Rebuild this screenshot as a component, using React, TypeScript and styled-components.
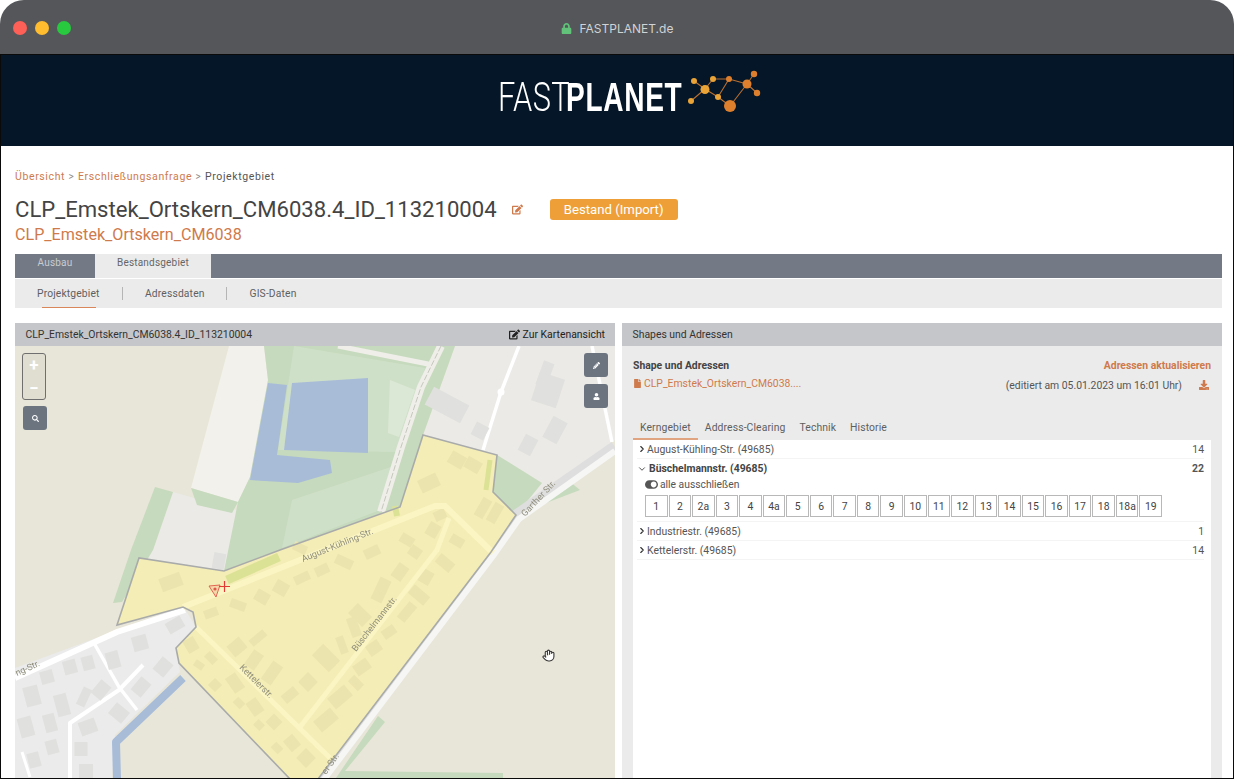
import styled, { createGlobalStyle } from "styled-components"
import { ChevronDown, ChevronRight, Hand } from "lucide-react"
import { FaDownload, FaEdit, FaFile, FaLock, FaPencilAlt, FaSearch, FaToggleOn, FaUser } from "react-icons/fa"

const GlobalStyle = createGlobalStyle`
    html, body {
        margin: 0;
        padding: 0;
        background: #ffffff;
    }
    * {
        box-sizing: border-box;
    }
`

const ORANGE = "#cf7a4c"

// map shapes, all in page coordinates (the svg viewBox starts at 15/346)
const yellowShape = "423,435 497,455 493,492 516,515 491,552 318,779 290,779 179,663 176,648 196,627 193,612 183,607 117,625 139,558 224,571 280,550 400,507"

const yellowHouses: Array<[number, number, number, number, number]> = [
    [171, 582, 22, 14, -20], [211, 613, 14, 9, -20], [238, 605, 16, 9, 20], [262, 597, 14, 12, 30], [281, 588, 14, 13, 30],
    [302, 578, 16, 9, -25], [322, 570, 14, 10, -25], [344, 562, 18, 10, 25], [372, 552, 16, 10, -25], [415, 552, 12, 11, 35],
    [400, 572, 12, 16, 35], [426, 577, 12, 14, 30], [445, 563, 18, 11, 40], [419, 595, 20, 11, 40], [407, 612, 10, 20, 40],
    [381, 590, 12, 24, 25], [360, 615, 20, 14, 45], [389, 632, 14, 10, -35], [354, 627, 10, 20, -20], [374, 648, 14, 12, -35],
    [342, 645, 8, 18, -20], [362, 667, 16, 12, -35], [326, 658, 24, 16, 45], [356, 683, 14, 9, 45], [308, 682, 14, 14, 45],
    [290, 695, 16, 10, -40], [340, 697, 22, 14, -40], [326, 720, 22, 14, -40], [272, 673, 12, 22, 35], [254, 660, 12, 18, 35],
    [237, 647, 16, 14, -40], [258, 638, 18, 8, -40], [191, 645, 12, 14, -30], [211, 658, 12, 8, 45], [199, 665, 10, 7, 35],
    [235, 683, 12, 18, -35], [215, 685, 10, 10, 45], [255, 707, 12, 16, -35], [239, 703, 10, 8, 45], [274, 722, 12, 12, 45],
    [259, 725, 9, 8, 45], [292, 743, 12, 14, -40], [277, 748, 10, 8, 45], [306, 758, 14, 14, 45], [457, 460, 16, 13, 30],
    [473, 465, 16, 12, 30], [429, 483, 20, 14, -25], [483, 508, 10, 20, 30], [495, 513, 10, 20, 30], [433, 530, 12, 14, 30],
    [457, 541, 14, 10, 30], [407, 540, 14, 10, 30], [440, 515, 12, 10, -25], [300, 548, 14, 9, 25],
]

const greyHouses: Array<[number, number, number, number, number]> = [
    [175, 625, 17, 12, -30], [140, 643, 15, 15, -15], [113, 660, 13, 17, -15], [88, 663, 12, 14, -15], [70, 667, 13, 14, -15],
    [47, 677, 13, 13, -15], [163, 667, 14, 16, 40], [141, 687, 13, 17, 40], [101, 690, 13, 17, 40], [84, 697, 9, 19, 25],
    [62, 705, 13, 22, -15], [32, 696, 15, 20, -15], [119, 713, 17, 14, 40], [88, 727, 17, 14, -20], [50, 723, 12, 18, -15],
    [26, 727, 14, 20, -15], [52, 747, 12, 14, -15], [81, 749, 13, 14, 0], [34, 760, 12, 15, -15], [86, 772, 14, 16, 0],
    [447, 405, 40, 20, 28], [480, 431, 14, 14, 28], [548, 390, 26, 30, 18], [545, 374, 11, 25, 20], [528, 445, 14, 18, 28], [555, 430, 16, 24, 28],
    [219, 561, 12, 16, 10],
]

const addressNumbers = ["1", "2", "2a", "3", "4", "4a", "5", "6", "7", "8", "9", "10", "11", "12", "13", "14", "15", "16", "17", "18", "18a", "19"]

const MapDrawing = () => (
    <MapSvg viewBox="15 346 600 432">
        <rect x="15" y="346" width="600" height="432" fill="#e8e6d9" />
        <polygon points="455,346 615,346 615,440 516,515 423,435" fill="#ebeae6" />

        <polygon points="229,346 264,346 268,380 250,477 238,502 191,488" fill="#f2f1ec" />
        <polygon points="173,492 243,512 224,571 139,558 153,550" fill="#ebeae6" />

        <polygon points="264,346 455,346 423,435 400,507 280,550 224,571 238,502 250,477 268,380" fill="#c6dabd" />
        <polygon points="294,346 425,368 397,452 278,450" fill="#cfe0c8" />
        <polygon points="292,500 391,467 380,510 282,548" fill="#cfe0c8" />
        <polygon points="390,380 415,390 399,437 388,433" fill="#dbe8d5" />
        <polygon points="155,487 173,492 153,550 122,602 113,603 131,550" fill="#c6dabd" />
        <polygon points="191,488 238,502 232,513 197,505" fill="#c6dabd" />
        <polygon points="497,455 542,483 516,515 493,492" fill="#c6dabd" />
        <polygon points="564,477 580,490 546,503" fill="#c6dabd" />
        <polygon points="378,716 385,722 345,771 503,773 503,778 336,778" fill="#c6dabd" />

        <polygon points="292,383 368,378 368,453 284,450" fill="#a8bcd8" />
        <polygon points="268,383 287,385 277,455 330,460 332,473 298,483 250,480" fill="#a8bcd8" />

        <polyline points="338,346 433,365" fill="none" stroke="#efeee9" strokeWidth="5" />
        <polyline points="441,346 421,387 401,447 381,512" fill="none" stroke="#efeee9" strokeWidth="8" />
        <polyline points="441,346 421,387 401,447 381,512" fill="none" stroke="#a9ada0" strokeWidth="0.6" strokeDasharray="6 2" />
        <polyline points="519,346 501,392 483,450" fill="none" stroke="#ffffff" strokeWidth="3.5" />
        <polyline points="592,346 612,442" fill="none" stroke="#ffffff" strokeWidth="3.5" />
        <circle cx="501" cy="392" r="3.500" fill="#ffffff" />

        <polygon points="15,668 183,606 196,627 176,648 180,672 115,735 112,779 15,779" fill="#ebebeb" />
        <polyline points="183,678 116,742 117,779" fill="none" stroke="#a8bcd8" strokeWidth="8" strokeLinejoin="round" />
        <polyline points="15,678 117,632 185,610" fill="none" stroke="#ffffff" strokeWidth="6" />
        <polyline points="94,643 119,687 137,710" fill="none" stroke="#ffffff" strokeWidth="3.5" />
        <polyline points="143,665 119,690 70,723 70,779" fill="none" stroke="#ffffff" strokeWidth="4" strokeLinejoin="round" />
        <polyline points="22,752 30,777" fill="none" stroke="#ffffff" strokeWidth="3" />
        {greyHouses.map(([x, y, w, h, r], i) => (
            <rect key={i} x={x - w / 2} y={y - h / 2} width={w} height={h} fill="#e0e0de" transform={`rotate(${r} ${x} ${y})`} />
        ))}

        <polyline points="615,447 517,515 491,552 318,782" fill="none" stroke="#dedede" strokeWidth="12" />
        <polyline points="615,451 519,519 493,556 322,782" fill="none" stroke="#f6f6f5" strokeWidth="6" />

        <polygon points={yellowShape} fill="#f4edb5" />
        <polyline points="227,580 279,557" fill="none" stroke="#dbe295" strokeWidth="9" />
        <polyline points="490,460 486,490" fill="none" stroke="#dbe295" strokeWidth="5" />
        <polyline points="395,506 397,516" fill="none" stroke="#dbe295" strokeWidth="6" />
        {yellowHouses.map(([x, y, w, h, r], i) => (
            <rect key={i} x={x - w / 2} y={y - h / 2} width={w} height={h} fill="#ece4ae" transform={`rotate(${r} ${x} ${y})`} />
        ))}
        <polyline points="183,607 435,506 445,506 493,553" fill="none" stroke="#fbf5c4" strokeWidth="6" />
        <polyline points="449,518 437,550 300,727" fill="none" stroke="#fbf5c4" strokeWidth="5" />
        <polyline points="196,627 330,758" fill="none" stroke="#fbf5c4" strokeWidth="5" />
        <polygon points={yellowShape} fill="none" stroke="#a9abab" strokeWidth="1.6" />

        <MapLabel transform="translate(303 562) rotate(-22)">August-Kühling-Str.</MapLabel>
        <MapLabel transform="translate(525 517) rotate(-47)">Garther Str.</MapLabel>
        <MapLabel transform="translate(356 652) rotate(-52)">Büschelmannstr.</MapLabel>
        <MapLabel transform="translate(239 668) rotate(45)">Kettelerstr.</MapLabel>
        <MapLabel transform="translate(17 676) rotate(-24)">ng-Str.</MapLabel>
        <MapLabel transform="translate(326 775) rotate(-55)">er Str.</MapLabel>

        <polygon points="209,586 220,585 216,597" fill="#f6d8a8" stroke="#e0584a" strokeWidth="0.9" />
        <circle cx="215" cy="589" r="1.600" fill="#e0584a" />
        <path d="M224.5 581v11M219 586.5h11" stroke="#e23b35" strokeWidth="1.2" fill="none" />
    </MapSvg>
)

export default function App() {
    return (
        <Window>
            <GlobalStyle />
            <TitleBar>
                <Dots>
                    <Dot color="#fe5f57" />
                    <Dot color="#febc2e" />
                    <Dot color="#28c83f" />
                </Dots>
                <Address>
                    <FaLock size={11} color="#62c27a" />
                    FASTPLANET.de
                </Address>
            </TitleBar>
            <Body>
                <Header>
                    <Logo>
                        <LogoThin>FAST</LogoThin>
                        <LogoBold>PLANET</LogoBold>
                        <svg width="78" height="48" viewBox="686 68 78 48">
                            <g stroke="#b96f30" strokeWidth="1.1" fill="none">
                                <path d="M693 80L704 88M712 78L704 88M690 100L704 88M704 88L717 96L729 105M712 78L728 78L746 83M728 78L717 96M746 83L753 73M746 83L756 92M746 83L729 105" />
                            </g>
                            <g fill="#e9a336">
                                <circle cx="693" cy="80" r="3" />
                                <circle cx="712" cy="78" r="3" />
                                <circle cx="704" cy="88.500" r="4.500" />
                                <circle cx="690" cy="100" r="3" />
                                <circle cx="717" cy="96" r="3" />
                            </g>
                            <g fill="#dd7f2d">
                                <circle cx="728" cy="78" r="3" />
                                <circle cx="746" cy="83" r="4.500" />
                                <circle cx="753" cy="73" r="3.200" />
                                <circle cx="756" cy="92" r="3.200" />
                                <circle cx="729" cy="105" r="6" />
                            </g>
                        </svg>
                    </Logo>
                </Header>
                <Content>
                    <Breadcrumb>
                        <Crumb>Übersicht</Crumb>
                        <CrumbSep>&gt;</CrumbSep>
                        <Crumb>Erschließungsanfrage</Crumb>
                        <CrumbSep>&gt;</CrumbSep>
                        <Crumb $current>Projektgebiet</Crumb>
                    </Breadcrumb>
                    <TitleRow>
                        <Title>CLP_Emstek_Ortskern_CM6038.4_ID_113210004</Title>
                        <EditIcon><FaEdit size={11} color={ORANGE} /></EditIcon>
                        <Badge>Bestand (Import)</Badge>
                    </TitleRow>
                    <SubTitle>CLP_Emstek_Ortskern_CM6038</SubTitle>
                    <TabBar>
                        <TopTab>Ausbau</TopTab>
                        <TopTab $active>Bestandsgebiet</TopTab>
                    </TabBar>
                    <SubNav>
                        <SubNavItem $active $width={62}>Projektgebiet</SubNavItem>
                        <SubNavSep />
                        <SubNavItem $width={58.5}>Adressdaten</SubNavItem>
                        <SubNavSep />
                        <SubNavItem $width={47}>GIS-Daten</SubNavItem>
                    </SubNav>
                    <Panels>
                        <Panel>
                            <PanelHeader>
                                <span>CLP_Emstek_Ortskern_CM6038.4_ID_113210004</span>
                                <MapLink><FaEdit size={11} color="#222" />Zur Kartenansicht</MapLink>
                            </PanelHeader>
                            <MapArea>
                                <MapDrawing />
                                <ZoomBox>
                                    <ZoomButton>+</ZoomButton>
                                    <ZoomButton>−</ZoomButton>
                                </ZoomBox>
                                <MapButton $left={8} $top={60}><FaSearch size={7} /></MapButton>
                                <MapButton $right={7} $top={7}><FaPencilAlt size={7} /></MapButton>
                                <MapButton $right={7} $top={38}><FaUser size={7} /></MapButton>
                                <HandCursor><Hand size={13} fill="#ffffff" color="#333333" strokeWidth={2} /></HandCursor>
                            </MapArea>
                        </Panel>
                        <Panel>
                            <PanelHeader>Shapes und Adressen</PanelHeader>
                            <ShapeBody>
                                <ShapeRow>
                                    <ShapeTitle>Shape und Adressen</ShapeTitle>
                                    <RefreshLink>Adressen aktualisieren</RefreshLink>
                                </ShapeRow>
                                <ShapeRow>
                                    <FileLink><FaFile size={9} />CLP_Emstek_Ortskern_CM6038....</FileLink>
                                    <Edited>
                                        (editiert am 05.01.2023 um 16:01 Uhr)
                                        <FaDownload size={10} color={ORANGE} />
                                    </Edited>
                                </ShapeRow>
                                <InnerTabs>
                                    <InnerTab $active>Kerngebiet</InnerTab>
                                    <InnerTab>Address-Clearing</InnerTab>
                                    <InnerTab>Technik</InnerTab>
                                    <InnerTab>Historie</InnerTab>
                                </InnerTabs>
                                <StreetList>
                                    <StreetRow>
                                        <StreetName><ChevronRight size={10} strokeWidth={2.6} color="#333" />August-Kühling-Str. (49685)</StreetName>
                                        <span>14</span>
                                    </StreetRow>
                                    <StreetRow $open>
                                        <StreetName $open><ChevronDown size={10} strokeWidth={2} color="#333" />Büschelmannstr. (49685)</StreetName>
                                        <span>22</span>
                                    </StreetRow>
                                    <OpenStreet>
                                        <ExcludeAll><FaToggleOn size={13} color="#555" />alle ausschließen</ExcludeAll>
                                        <Numbers>
                                            {addressNumbers.map(n => <NumberBox key={n}>{n}</NumberBox>)}
                                        </Numbers>
                                    </OpenStreet>
                                    <StreetRow>
                                        <StreetName><ChevronRight size={10} strokeWidth={2.6} color="#333" />Industriestr. (49685)</StreetName>
                                        <span>1</span>
                                    </StreetRow>
                                    <StreetRow>
                                        <StreetName><ChevronRight size={10} strokeWidth={2.6} color="#333" />Kettelerstr. (49685)</StreetName>
                                        <span>14</span>
                                    </StreetRow>
                                </StreetList>
                            </ShapeBody>
                        </Panel>
                    </Panels>
                </Content>
            </Body>
        </Window>
    )
}

const Window = styled.div`
    display: flex;
    flex-direction: column;
    width: 1234px;
    height: 779px;
    overflow: hidden;
    border-radius: 24px 24px 0 0;
    font-family: Roboto, "Liberation Sans", sans-serif;
    background: #ffffff;
`

const TitleBar = styled.div`
    position: relative;
    display: flex;
    align-items: center;
    justify-content: center;
    flex: 0 0 55px;
    background: #54565a;
    border-bottom: 1px solid #0a0a0a;
`

const Dots = styled.div`
    position: absolute;
    left: 13px;
    top: 21px;
    display: flex;
    gap: 8px;
`

const Dot = styled.div<{color: string}>`
    width: 14px;
    height: 14px;
    border-radius: 50%;
    background: ${props => props.color};
`

const Address = styled.div`
    display: flex;
    align-items: center;
    gap: 8px;
    font-family: Inter, "Liberation Sans", sans-serif;
    font-size: 12px;
    color: #d2d3d5;
    margin-top: 2px;
`

const Body = styled.div`
    display: flex;
    flex-direction: column;
    flex: 1;
    min-height: 0;
    border-left: 1px solid #0a0a0a;
    border-right: 1px solid #0a0a0a;
    border-bottom: 1px solid #0a0a0a;
`

const Header = styled.div`
    display: flex;
    justify-content: center;
    flex: 0 0 91px;
    background: #041627;
`

const Logo = styled.div`
    display: flex;
    align-items: center;
    margin-left: 29px;
    color: #ffffff;
    font-size: 41px;
    line-height: 1;

    svg {
        margin-left: 3px;
        margin-top: -16px;
    }
`

const LogoThin = styled.span`
    display: inline-block;
    width: 68px;
    margin-top: -6px;
    font-family: Roboto, "Liberation Sans", sans-serif;
    font-weight: 300;
    transform: scaleX(0.75);
    transform-origin: left center;
    letter-spacing: 0.5px;
`

const LogoBold = styled.span`
    display: inline-block;
    width: 118px;
    margin-top: -6px;
    font-family: "Liberation Sans", sans-serif;
    font-weight: 700;
    transform: scaleX(0.685);
    transform-origin: left center;
    letter-spacing: 1px;
`

const Content = styled.div`
    display: flex;
    flex-direction: column;
    flex: 1;
    min-height: 0;
    padding: 24px 11px 0 14px;
    background: #ffffff;
`

const Breadcrumb = styled.div`
    display: flex;
    align-items: center;
    height: 13px;
    font-size: 10.5px;
    letter-spacing: 0.62px;
`

const Crumb = styled.span<{$current?: boolean}>`
    color: ${props => props.$current ? "#555555" : ORANGE};
`

const CrumbSep = styled.span`
    margin: 0 3.500px;
    color: #8a8a8a;
    font-size: 10px;
`

const TitleRow = styled.div`
    display: flex;
    align-items: center;
    margin-top: 14px;
    height: 24px;
`

const Title = styled.h1`
    margin: 0;
    font-size: 22.1px;
    font-weight: 400;
    color: #444444;
    white-space: nowrap;
`

const EditIcon = styled.span`
    display: flex;
    margin-left: 15px;
    margin-right: 27px;
`

const Badge = styled.div`
    display: flex;
    align-items: center;
    justify-content: center;
    width: 128px;
    height: 21px;
    border-radius: 3px;
    background: #ee9f37;
    color: #ffffff;
    font-size: 13.2px;
`

const SubTitle = styled.div`
    margin-top: 3px;
    height: 21px;
    font-size: 16.1px;
    line-height: 21px;
    color: ${ORANGE};
`

const TabBar = styled.div`
    display: flex;
    margin-top: 9px;
    flex: 0 0 24px;
    background: #737a85;
`

const TopTab = styled.div<{$active?: boolean}>`
    display: flex;
    justify-content: center;
    width: ${props => props.$active ? "116px" : "80px"};
    padding-top: 3px;
    font-size: 10px;
    letter-spacing: 0.2px;
    color: ${props => props.$active ? "#666666" : "#c8ccd1"};
    background: ${props => props.$active ? "#ebebeb" : "transparent"};
`

const SubNav = styled.div`
    display: flex;
    align-items: center;
    flex: 0 0 29px;
    margin-top: 1px;
    padding-left: 22px;
    background: #ebebeb;
`

const SubNavItem = styled.div<{$active?: boolean, $width: number}>`
    position: relative;
    width: ${props => props.$width}px;
    height: 100%;
    display: flex;
    align-items: center;
    white-space: nowrap;
    font-size: 10.3px;
    letter-spacing: 0.15px;
    color: #5f5f5f;
    ${props => props.$active && `
        &::after {
            content: "";
            position: absolute;
            left: 5px;
            right: 3px;
            bottom: 0;
            height: 1.500px;
            background: #d9865a;
        }
    `}
`

const SubNavSep = styled.div`
    width: 1px;
    height: 13px;
    margin: 0 22.500px;
    background: #b5b5b5;
`

const Panels = styled.div`
    display: flex;
    gap: 7px;
    flex: 1;
    min-height: 0;
    margin-top: 15px;
`

const Panel = styled.div`
    display: flex;
    flex-direction: column;
    width: 600px;
    min-height: 0;
`

const PanelHeader = styled.div`
    display: flex;
    align-items: center;
    justify-content: space-between;
    flex: 0 0 23px;
    padding: 0 10px 0 10.500px;
    background: #c5c6c9;
    font-size: 10.4px;
    color: #333333;
`

const MapLink = styled.span`
    display: flex;
    align-items: center;
    gap: 3px;
    color: #222222;
`

const MapArea = styled.div`
    position: relative;
    flex: 1;
    min-height: 0;
    overflow: hidden;
`

const MapSvg = styled.svg`
    display: block;
    width: 600px;
    height: 432px;
    filter: blur(0.4px);
`

const MapLabel = styled.text`
    font-family: Roboto, "Liberation Sans", sans-serif;
    font-size: 9px;
    fill: #8f8e7c;
`

const ZoomBox = styled.div`
    position: absolute;
    left: 7px;
    top: 7px;
    display: flex;
    flex-direction: column;
    width: 24px;
    height: 47px;
    border: 1px solid #6f6f6f;
    border-radius: 3px;
    background: rgba(222, 220, 206, 0.85);
`

const ZoomButton = styled.div`
    display: flex;
    align-items: center;
    justify-content: center;
    flex: 1;
    font-size: 17px;
    font-weight: 700;
    color: #ffffff;
`

const MapButton = styled.div<{$left?: number, $right?: number, $top: number}>`
    position: absolute;
    top: ${props => props.$top}px;
    ${props => props.$left !== undefined ? `left: ${props.$left}px;` : ""}
    ${props => props.$right !== undefined ? `right: ${props.$right}px;` : ""}
    display: flex;
    align-items: center;
    justify-content: center;
    width: 24px;
    height: 24px;
    border-radius: 3px;
    background: #6c7480;
    color: #ffffff;
`

const HandCursor = styled.div`
    position: absolute;
    left: 527px;
    top: 303px;
    display: flex;
`

const ShapeBody = styled.div`
    display: flex;
    flex-direction: column;
    flex: 1;
    min-height: 0;
    padding: 10px 11px 0 11px;
    background: #ebebeb;
`

const ShapeRow = styled.div`
    display: flex;
    align-items: center;
    justify-content: space-between;
    height: 18.5px;
    font-size: 10.4px;
`

const ShapeTitle = styled.span`
    font-weight: 700;
    color: #444444;
`

const RefreshLink = styled.span`
    font-weight: 700;
    color: ${ORANGE};
`

const FileLink = styled.span`
    display: flex;
    align-items: center;
    gap: 2px;
    color: ${ORANGE};
`

const Edited = styled.span`
    display: flex;
    align-items: center;
    gap: 17px;
    padding-right: 2px;
    color: #555555;
    margin-top: 3px;
`

const InnerTabs = styled.div`
    display: flex;
    margin-top: 22px;
    height: 25px;
`

const InnerTab = styled.div<{$active?: boolean}>`
    display: flex;
    align-items: center;
    padding: 1px 7px 0;
    font-size: 10.4px;
    letter-spacing: 0.1px;
    color: #5f5f5f;
    border-bottom: 2px solid ${props => props.$active ? "#e0a481" : "transparent"};
`

const StreetList = styled.div`
    flex: 1;
    min-height: 0;
    padding: 0 7px 0 4px;
    background: #ffffff;
`

const StreetRow = styled.div<{$open?: boolean}>`
    display: flex;
    align-items: center;
    justify-content: space-between;
    height: 19px;
    font-size: 10.4px;
    color: #555555;
    border-bottom: ${props => props.$open ? "none" : "1px solid #f4f4f4"};
    font-weight: ${props => props.$open ? 700 : 400};
`

const StreetName = styled.span<{$open?: boolean}>`
    display: flex;
    align-items: center;
    gap: ${props => props.$open ? "2px" : "0"};
    color: ${props => props.$open ? "#444444" : "#555555"};
`

const OpenStreet = styled.div`
    padding: 0 0 4px 8px;
    border-bottom: 1px solid #f4f4f4;
`

const ExcludeAll = styled.div`
    display: flex;
    align-items: center;
    gap: 2px;
    height: 13px;
    font-size: 10.3px;
    color: #555555;
`

const Numbers = styled.div`
    display: flex;
    gap: 1px;
    margin-top: 4px;
`

const NumberBox = styled.div`
    display: flex;
    align-items: center;
    justify-content: center;
    width: 22.550px;
    height: 22px;
    border: 1px solid #b8b8b8;
    font-size: 10.4px;
    color: #444444;
`
